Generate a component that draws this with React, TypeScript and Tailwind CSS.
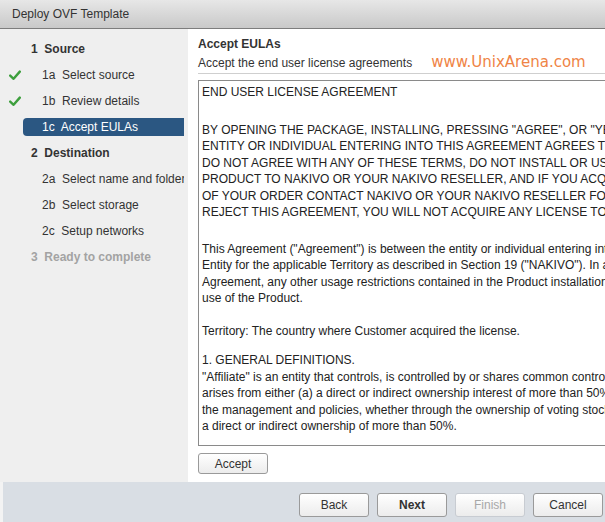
import React from 'react';

type Step = { label: string; kind: 'head' | 'sub' | 'disabled'; done?: boolean; active?: boolean };

const STEPS: Step[] = [
  { label: '1  Source', kind: 'head' },
  { label: '1a  Select source', kind: 'sub', done: true },
  { label: '1b  Review details', kind: 'sub', done: true },
  { label: '1c  Accept EULAs', kind: 'sub', active: true },
  { label: '2  Destination', kind: 'head' },
  { label: '2a  Select name and folder', kind: 'sub' },
  { label: '2b  Select storage', kind: 'sub' },
  { label: '2c  Setup networks', kind: 'sub' },
  { label: '3  Ready to complete', kind: 'disabled' },
];

// paragraphs of the EULA, with the gap that sits above each one
const EULA: { mt: string; lines: string[] }[] = [
  { mt: 'mt-0', lines: ['END USER LICENSE AGREEMENT'] },
  {
    mt: 'mt-[21px]',
    lines: [
      'BY OPENING THE PACKAGE, INSTALLING, PRESSING "AGREE", OR "YES", OR USING THE SOFTWARE,',
      'ENTITY OR INDIVIDUAL ENTERING INTO THIS AGREEMENT AGREES TO BE BOUND BY THESE TERMS.',
      'DO NOT AGREE WITH ANY OF THESE TERMS, DO NOT INSTALL OR USE THE PRODUCT AND RETURN THE',
      'PRODUCT TO NAKIVO OR YOUR NAKIVO RESELLER, AND IF YOU ACQUIRED THE PRODUCT AS PART',
      'OF YOUR ORDER CONTACT NAKIVO OR YOUR NAKIVO RESELLER FOR A REFUND. IF YOU',
      'REJECT THIS AGREEMENT, YOU WILL NOT ACQUIRE ANY LICENSE TO USE THE PRODUCT.',
    ],
  },
  {
    mt: 'mt-[20px]',
    lines: [
      'This Agreement ("Agreement") is between the entity or individual entering into this Agreement and the NAKIVO',
      'Entity for the applicable Territory as described in Section 19 ("NAKIVO"). In addition to the terms of this',
      'Agreement, any other usage restrictions contained in the Product installation instructions shall govern',
      'use of the Product.',
    ],
  },
  { mt: 'mt-[16px]', lines: ['Territory: The country where Customer acquired the license.'] },
  {
    mt: 'mt-[13px]',
    lines: [
      '1. GENERAL DEFINITIONS.',
      '"Affiliate" is an entity that controls, is controlled by or shares common control with a party, where such control',
      'arises from either (a) a direct or indirect ownership interest of more than 50% or (b) the power to direct',
      'the management and policies, whether through the ownership of voting stock, by contract or otherwise, or',
      'a direct or indirect ownership of more than 50%.',
    ],
  },
];

const CheckMark: React.FC = () => (
  <svg width="12" height="11" viewBox="0 0 12 11" className="shrink-0">
    <path d="M1.2 5.6 L4.6 8.8 L10.8 1.6" fill="none" stroke="#3d9f3d" strokeWidth={2.4} strokeLinecap="round" strokeLinejoin="round" />
  </svg>
);

const WizButton: React.FC<{ children: React.ReactNode; bold?: boolean; disabled?: boolean; className?: string }> = ({
  children,
  bold,
  disabled,
  className = '',
}) => (
  <button
    type="button"
    className={`rounded-[3px] border bg-gradient-to-b from-white to-[#ececec] text-[12px] ${
      disabled ? 'border-[#c8ccd2] text-[#a8a8a8]' : 'border-[#9a9a9a] text-[#333]'
    } ${bold ? 'font-bold' : ''} ${className}`}
  >
    {children}
  </button>
);

export default function App() {
  return (
    <div className="w-[605px] h-[522px] overflow-hidden flex flex-col bg-white font-['Liberation_Sans',Arial,sans-serif] text-[12px] text-[#333]">
      {/* title bar */}
      <div className="h-[29px] shrink-0 flex items-center pl-[12px] bg-gradient-to-b from-[#e7e7e7] to-[#c9c9c9] border-b border-[#7d7d7d]">
        <span className="text-[12px] text-[#333]">Deploy OVF Template</span>
      </div>

      <div className="flex flex-1 min-h-0">
        {/* steps */}
        <div className="w-[188px] shrink-0 bg-[#efefef] pt-[7px]">
          {STEPS.map((s) => (
            <div key={s.label} className="h-[26px] flex items-center relative">
              {s.done && (
                <span className="absolute left-[9px] top-[8px]">
                  <CheckMark />
                </span>
              )}
              {s.kind === 'sub' ? (
                <div
                  className={`ml-[23px] w-[161px] h-[18px] flex items-center pl-[19px] overflow-hidden whitespace-pre ${
                    s.active ? 'bg-[#2b5782] text-white rounded-l-[4px]' : 'text-[#333]'
                  }`}
                >
                  {s.label}
                </div>
              ) : (
                <div
                  className={`ml-[31px] font-bold whitespace-pre ${s.kind === 'disabled' ? 'text-[#a3a3a3]' : 'text-[#333]'}`}
                >
                  {s.label}
                </div>
              )}
            </div>
          ))}
        </div>

        {/* page body */}
        <div className="flex-1 min-w-0 bg-white pl-[10px] pt-[6px] flex flex-col">
          <div className="leading-[18px] font-bold text-[#333]">Accept EULAs</div>
          <div className="h-[19px] flex items-center whitespace-nowrap">
            <span className="text-[#333]">Accept the end user license agreements</span>
            <span className="ml-[19px] font-['DejaVu_Sans',Verdana,sans-serif] text-[15px] text-[#ef8446]">
              www.UnixArena.com
            </span>
          </div>
          <div className="mt-[1px] border-t border-[#cfcfcf]" />

          <div className="mt-[6px] w-[430px] h-[366px] border border-[#8a8a8a] overflow-hidden pl-[3px] pt-[3px] text-[#222]">
            {EULA.map((p, i) => (
              <div key={i} className={p.mt}>
                {p.lines.map((line, j) => (
                  <div key={j} className="leading-[16.5px] whitespace-nowrap">
                    {line}
                  </div>
                ))}
              </div>
            ))}
          </div>

          <div className="mt-[7px]">
            <WizButton className="w-[70px] h-[21px]">Accept</WizButton>
          </div>
        </div>
      </div>

      {/* footer */}
      <div className="h-[40px] shrink-0 bg-[#d9dee4] border-l-[3px] border-[#f3f3f3] flex justify-end items-start pt-[11px] pr-[2px] gap-[8px]">
        <WizButton className="w-[70px] h-[24px]">Back</WizButton>
        <WizButton className="w-[70px] h-[24px]" bold>
          Next
        </WizButton>
        <WizButton className="w-[70px] h-[24px]" disabled>
          Finish
        </WizButton>
        <WizButton className="w-[70px] h-[24px]">Cancel</WizButton>
      </div>
    </div>
  );
}
